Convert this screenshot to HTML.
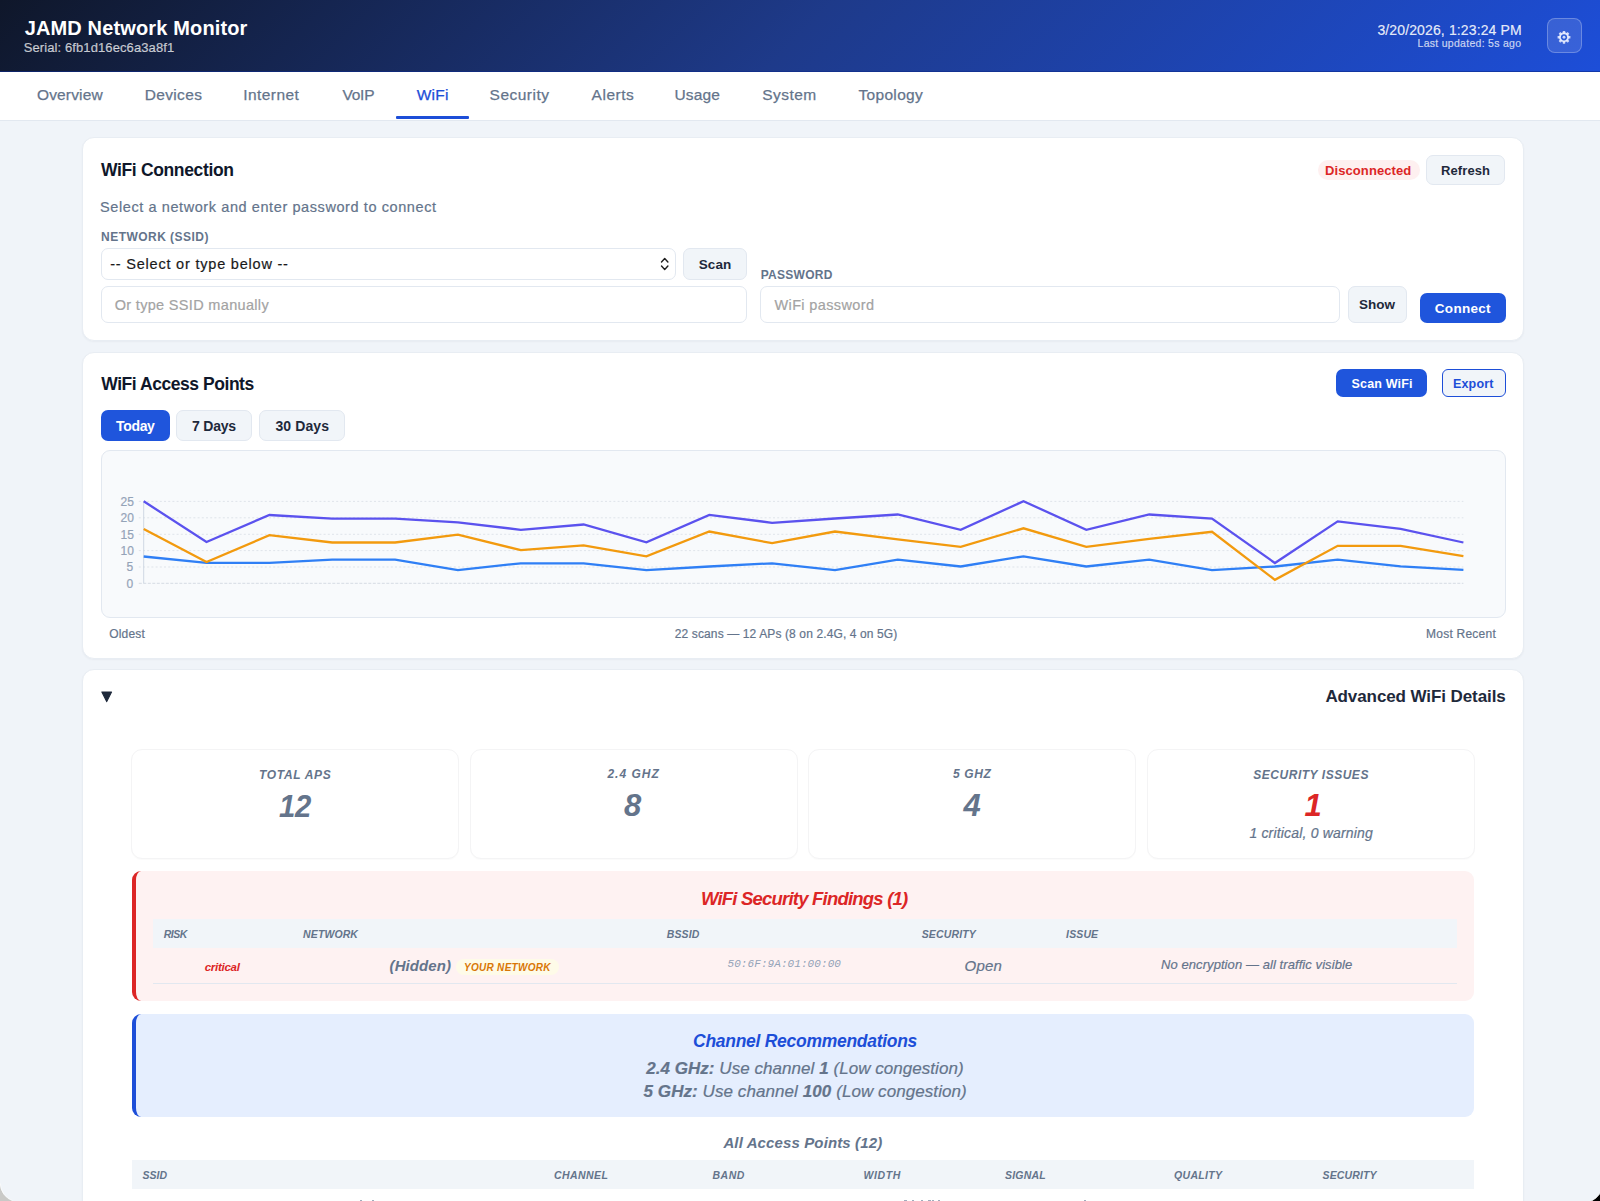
<!DOCTYPE html>
<html><head><meta charset="utf-8"><title>JAMD Network Monitor - WiFi</title>
<style>
html,body{margin:0;padding:0;}
body{width:1600px;height:1201px;overflow:hidden;position:relative;background:#f0f4f9;font-family:'Liberation Sans', sans-serif;}
.b{position:absolute;}
.t{position:absolute;white-space:pre;line-height:1;}
.t b{font-weight:700;}
</style></head><body>
<div class="b" style="left:0px;top:0px;width:1600.00px;height:72.00px;background:linear-gradient(135deg,#0f172a 0%,#1e3a8a 50%,#1d4ed8 100%);"></div><div class="b" style="left:0px;top:71px;width:1600.00px;height:1.00px;background:#0b2a8a;opacity:.6;"></div><div class="b" style="left:0px;top:72px;width:1600.00px;height:48.00px;background:#fff;"></div><div class="b" style="left:0px;top:120px;width:1600.00px;height:1.00px;background:#e2e8f0;"></div><div class="b" style="left:395.5px;top:116px;width:73.50px;height:3.00px;background:#1d4ed8;border-radius:1px;"></div><div class="b" style="left:1547px;top:18px;width:35.00px;height:35.00px;background:rgba(255,255,255,0.12);border:1px solid rgba(255,255,255,0.25);border-radius:8px;box-sizing:border-box;"></div><div class="b" style="left:82px;top:137px;width:1442.30px;height:204.20px;background:#fff;border:1px solid #e8edf3;border-radius:12px;box-sizing:border-box;box-shadow:0 1px 2px rgba(15,23,42,0.04);"></div><div class="b" style="left:1318px;top:159.5px;width:102.00px;height:20.50px;background:#fef0f0;border-radius:10px;"></div><div class="b" style="left:1426.4px;top:154.5px;width:79.00px;height:30.00px;background:#f1f5f9;border:1px solid #e2e8f0;border-radius:7px;box-sizing:border-box;"></div><div class="b" style="left:100.5px;top:248px;width:575.00px;height:32.00px;background:#fff;border:1px solid #e2e8f0;border-radius:7px;box-sizing:border-box;"></div><div class="b" style="left:683.2px;top:248px;width:63.50px;height:32.00px;background:#f1f5f9;border:1px solid #e2e8f0;border-radius:7px;box-sizing:border-box;"></div><div class="b" style="left:100.5px;top:286px;width:646.20px;height:37.00px;background:#fff;border:1px solid #e2e8f0;border-radius:7px;box-sizing:border-box;"></div><div class="b" style="left:760.4px;top:286px;width:579.90px;height:37.00px;background:#fff;border:1px solid #e2e8f0;border-radius:7px;box-sizing:border-box;"></div><div class="b" style="left:1347.8px;top:286px;width:59.10px;height:37.00px;background:#f1f5f9;border:1px solid #e2e8f0;border-radius:7px;box-sizing:border-box;"></div><div class="b" style="left:1420.4px;top:293.4px;width:85.30px;height:29.60px;background:#1f55dc;border-radius:7px;"></div><div class="b" style="left:82px;top:351.6px;width:1442.30px;height:307.40px;background:#fff;border:1px solid #e8edf3;border-radius:12px;box-sizing:border-box;box-shadow:0 1px 2px rgba(15,23,42,0.04);"></div><div class="b" style="left:1336.4px;top:369px;width:90.60px;height:28.30px;background:#1f55dc;border-radius:7px;"></div><div class="b" style="left:1441.8px;top:369px;width:63.90px;height:28.30px;background:#f1f5f9;border:1.3px solid #1d4ed8;border-radius:6px;box-sizing:border-box;"></div><div class="b" style="left:100.9px;top:410.4px;width:68.70px;height:30.80px;background:#1f55dc;border-radius:7px;"></div><div class="b" style="left:176.2px;top:410.4px;width:76.00px;height:30.80px;background:#f1f5f9;border:1px solid #e2e8f0;border-radius:7px;box-sizing:border-box;"></div><div class="b" style="left:259.2px;top:410.4px;width:85.50px;height:30.80px;background:#f1f5f9;border:1px solid #e2e8f0;border-radius:7px;box-sizing:border-box;"></div><div class="b" style="left:100.7px;top:450.4px;width:1404.90px;height:167.20px;background:#f8fafc;border:1px solid #e2e8f0;border-radius:9px;box-sizing:border-box;"></div><div class="b" style="left:82px;top:669.4px;width:1442.30px;height:590.60px;background:#fff;border:1px solid #e8edf3;border-radius:12px;box-sizing:border-box;box-shadow:0 1px 2px rgba(15,23,42,0.04);"></div><div class="b" style="left:130.8px;top:749.2px;width:328.60px;height:110.00px;background:#fff;border:1px solid #f4f4f5;border-radius:11px;box-sizing:border-box;box-shadow:0 1px 1px rgba(0,0,0,0.02);"></div><div class="b" style="left:469.7px;top:749.2px;width:328.20px;height:110.00px;background:#fff;border:1px solid #f4f4f5;border-radius:11px;box-sizing:border-box;box-shadow:0 1px 1px rgba(0,0,0,0.02);"></div><div class="b" style="left:808.4px;top:749.2px;width:327.80px;height:110.00px;background:#fff;border:1px solid #f4f4f5;border-radius:11px;box-sizing:border-box;box-shadow:0 1px 1px rgba(0,0,0,0.02);"></div><div class="b" style="left:1147.4px;top:749.2px;width:327.80px;height:110.00px;background:#fff;border:1px solid #f4f4f5;border-radius:11px;box-sizing:border-box;box-shadow:0 1px 1px rgba(0,0,0,0.02);"></div><div class="b" style="left:132px;top:871px;width:1342.00px;height:130.00px;background:#fef2f2;border-left:4px solid #dc2626;border-radius:9px;box-sizing:border-box;"></div><div class="b" style="left:153.3px;top:919.2px;width:1304.20px;height:29.20px;background:#f1f5f9;"></div><div class="b" style="left:153.3px;top:983px;width:1304.20px;height:1.20px;background:#e2e8f0;"></div><div class="b" style="left:455.6px;top:959px;width:103.90px;height:15.50px;background:#fefbe8;border-radius:8px;"></div><div class="b" style="left:132px;top:1014px;width:1342.00px;height:102.50px;background:#e5eefe;border-left:4px solid #1d4ed8;border-radius:9px;box-sizing:border-box;"></div><div class="b" style="left:132px;top:1160px;width:1342.00px;height:29.00px;background:#f1f5f9;"></div><div class="b" style="left:359.8px;top:1199.6px;width:2.20px;height:1.40px;background:#8a97ab;opacity:.8;"></div><div class="b" style="left:372px;top:1199.6px;width:2.20px;height:1.40px;background:#8a97ab;opacity:.8;"></div><div class="b" style="left:904.4px;top:1199.6px;width:2.20px;height:1.40px;background:#8a97ab;opacity:.8;"></div><div class="b" style="left:912.2px;top:1199.6px;width:2.20px;height:1.40px;background:#8a97ab;opacity:.8;"></div><div class="b" style="left:921.2px;top:1199.6px;width:2.20px;height:1.40px;background:#8a97ab;opacity:.8;"></div><div class="b" style="left:928.4px;top:1199.6px;width:2.20px;height:1.40px;background:#8a97ab;opacity:.8;"></div><div class="b" style="left:932.1px;top:1199.6px;width:2.20px;height:1.40px;background:#8a97ab;opacity:.8;"></div><div class="b" style="left:937.7px;top:1199.6px;width:2.20px;height:1.40px;background:#8a97ab;opacity:.8;"></div><div class="b" style="left:1084px;top:1199.6px;width:2.20px;height:1.40px;background:#8a97ab;opacity:.8;"></div>
<svg style="position:absolute;left:0;top:0" width="1600" height="1201" viewBox="0 0 1600 1201"><line x1="138.8" y1="501.4" x2="1463.4" y2="501.4" stroke="#dfe4ea" stroke-width="1" stroke-dasharray="2 2.2"/><line x1="138.8" y1="517.8" x2="1463.4" y2="517.8" stroke="#dfe4ea" stroke-width="1" stroke-dasharray="2 2.2"/><line x1="138.8" y1="534.3" x2="1463.4" y2="534.3" stroke="#dfe4ea" stroke-width="1" stroke-dasharray="2 2.2"/><line x1="138.8" y1="550.6" x2="1463.4" y2="550.6" stroke="#dfe4ea" stroke-width="1" stroke-dasharray="2 2.2"/><line x1="138.8" y1="567.0" x2="1463.4" y2="567.0" stroke="#dfe4ea" stroke-width="1" stroke-dasharray="2 2.2"/><line x1="138.8" y1="583.3" x2="1463.4" y2="583.3" stroke="#d5dbe3" stroke-width="1" stroke-dasharray="3 1.5"/><line x1="143.7" y1="501.4" x2="143.7" y2="583.3" stroke="#cfd8e3" stroke-width="1"/>
<polyline points="143.7,556.5 206.5,562.9 269.4,562.9 332.2,559.7 395.1,559.7 457.9,570.1 520.8,563.3 583.6,563.3 646.4,570.1 709.3,566.5 772.1,563.3 835.0,570.1 897.8,559.7 960.7,566.5 1023.5,556.3 1086.3,566.5 1149.2,559.7 1212.0,570.1 1274.9,566.5 1337.7,559.6 1400.6,566.3 1463.4,569.8" fill="none" stroke="#2f7ff5" stroke-width="2.3" stroke-linejoin="miter"/>
<polyline points="143.7,528.9 206.5,562.0 269.4,535.2 332.2,542.5 395.1,542.5 457.9,534.7 520.8,550.2 583.6,545.3 646.4,556.4 709.3,531.5 772.1,543.2 835.0,531.5 897.8,539.3 960.7,546.8 1023.5,528.3 1086.3,546.8 1149.2,538.9 1212.0,531.8 1274.9,579.8 1337.7,545.8 1400.6,545.8 1463.4,556.2" fill="none" stroke="#f29a0e" stroke-width="2.3" stroke-linejoin="miter"/>
<polyline points="143.7,501.3 206.5,542.0 269.4,515.0 332.2,518.7 395.1,518.7 457.9,522.3 520.8,529.8 583.6,524.5 646.4,542.4 709.3,514.9 772.1,522.8 835.0,518.5 897.8,514.5 960.7,529.8 1023.5,501.2 1086.3,529.8 1149.2,514.5 1212.0,518.6 1274.9,563.0 1337.7,521.4 1400.6,528.8 1463.4,542.5" fill="none" stroke="#5b52ee" stroke-width="2.3" stroke-linejoin="miter"/>
<path d="M101.9 692.0 L111.5 692.0 L106.7 701.6 Z" fill="#1e293b" stroke="#1e293b" stroke-width="1.2" stroke-linejoin="round"/>
<path d="M661.5 262 L664.7 258.6 L667.9 262 M661.5 266 L664.7 269.4 L667.9 266" fill="none" stroke="#1e1e1e" stroke-width="1.4" stroke-linecap="round" stroke-linejoin="round"/>
<path d="M0 1183.5 L0 1201 L13 1201 A19 19 0 0 1 0 1183.5 Z" fill="#c9c9c7"/><path d="M0.3 1183.5 A19 19 0 0 0 13 1201" fill="none" stroke="#fff" stroke-width="0.8" opacity=".8"/>
<path d="M1600 1193.5 L1600 1201 L1591.5 1201 A24 24 0 0 0 1600 1193.5 Z" fill="#000"/><path d="M1591.5 1201 A24 24 0 0 0 1600 1193.5" fill="none" stroke="#fff" stroke-width="0.9" opacity=".9"/>
</svg><svg style="position:absolute;left:0;top:0" width="1600" height="80" viewBox="0 0 1600 80">
<g transform="translate(1564,37.3)" fill="rgba(235,240,255,0.85)">
<circle r="5.0"/>
<rect x="-1.25" y="-6.4" width="2.5" height="12.8" rx="0.4"/>
<rect x="-1.25" y="-6.4" width="2.5" height="12.8" rx="0.4" transform="rotate(45)"/>
<rect x="-1.25" y="-6.4" width="2.5" height="12.8" rx="0.4" transform="rotate(90)"/>
<rect x="-1.25" y="-6.4" width="2.5" height="12.8" rx="0.4" transform="rotate(135)"/>
<circle r="3.1" fill="#2d5dd8"/>
<circle r="1.45"/>
</g>
</svg>
<span class="t" style="left:24.70px;top:17.70px;color:#ffffff;font-family:'Liberation Sans', sans-serif;font-size:20px;font-weight:700;font-style:normal;letter-spacing:0.142px;">JAMD Network Monitor</span><span class="t" style="left:23.70px;top:41.30px;color:rgba(255,255,255,0.72);font-family:'Liberation Sans', sans-serif;font-size:13px;font-weight:400;font-style:normal;letter-spacing:0.100px;-webkit-text-stroke:0.2px currentColor;">Serial: 6fb1d16ec6a3a8f1</span><span class="t" style="left:1377.40px;top:22.50px;color:rgba(255,255,255,0.88);font-family:'Liberation Sans', sans-serif;font-size:14px;font-weight:400;font-style:normal;letter-spacing:0.130px;-webkit-text-stroke:0.2px currentColor;">3/20/2026, 1:23:24 PM</span><span class="t" style="left:1417.50px;top:37.60px;color:rgba(255,255,255,0.72);font-family:'Liberation Sans', sans-serif;font-size:10.5px;font-weight:400;font-style:normal;letter-spacing:0.289px;-webkit-text-stroke:0.2px currentColor;">Last updated: 5s ago</span><span class="t" style="left:37.00px;top:87.20px;color:#64748b;font-family:'Liberation Sans', sans-serif;font-size:15.5px;font-weight:400;font-style:normal;letter-spacing:0.143px;-webkit-text-stroke:0.25px currentColor;">Overview</span><span class="t" style="left:144.75px;top:87.20px;color:#64748b;font-family:'Liberation Sans', sans-serif;font-size:15.5px;font-weight:400;font-style:normal;letter-spacing:0.333px;-webkit-text-stroke:0.25px currentColor;">Devices</span><span class="t" style="left:243.25px;top:87.20px;color:#64748b;font-family:'Liberation Sans', sans-serif;font-size:15.5px;font-weight:400;font-style:normal;letter-spacing:0.429px;-webkit-text-stroke:0.25px currentColor;">Internet</span><span class="t" style="left:342.50px;top:87.20px;color:#64748b;font-family:'Liberation Sans', sans-serif;font-size:15.5px;font-weight:400;font-style:normal;letter-spacing:-0.250px;-webkit-text-stroke:0.25px currentColor;">VoIP</span><span class="t" style="left:416.70px;top:87.20px;color:#1d4ed8;font-family:'Liberation Sans', sans-serif;font-size:15.5px;font-weight:400;font-style:normal;letter-spacing:0.267px;-webkit-text-stroke:0.25px currentColor;">WiFi</span><span class="t" style="left:489.60px;top:87.20px;color:#64748b;font-family:'Liberation Sans', sans-serif;font-size:15.5px;font-weight:400;font-style:normal;letter-spacing:0.486px;-webkit-text-stroke:0.25px currentColor;">Security</span><span class="t" style="left:591.60px;top:87.20px;color:#64748b;font-family:'Liberation Sans', sans-serif;font-size:15.5px;font-weight:400;font-style:normal;letter-spacing:0.520px;-webkit-text-stroke:0.25px currentColor;">Alerts</span><span class="t" style="left:674.50px;top:87.20px;color:#64748b;font-family:'Liberation Sans', sans-serif;font-size:15.5px;font-weight:400;font-style:normal;letter-spacing:0.125px;-webkit-text-stroke:0.25px currentColor;">Usage</span><span class="t" style="left:762.20px;top:87.20px;color:#64748b;font-family:'Liberation Sans', sans-serif;font-size:15.5px;font-weight:400;font-style:normal;letter-spacing:0.460px;-webkit-text-stroke:0.25px currentColor;">System</span><span class="t" style="left:858.40px;top:87.20px;color:#64748b;font-family:'Liberation Sans', sans-serif;font-size:15.5px;font-weight:400;font-style:normal;letter-spacing:0.343px;-webkit-text-stroke:0.25px currentColor;">Topology</span><span class="t" style="left:101.00px;top:162.20px;color:#0f172a;font-family:'Liberation Sans', sans-serif;font-size:17.5px;font-weight:700;font-style:normal;letter-spacing:-0.350px;">WiFi Connection</span><span class="t" style="left:1325.00px;top:163.50px;color:#dc2626;font-family:'Liberation Sans', sans-serif;font-size:13px;font-weight:700;font-style:normal;letter-spacing:0.091px;">Disconnected</span><span class="t" style="left:1441.00px;top:163.50px;color:#1e293b;font-family:'Liberation Sans', sans-serif;font-size:13px;font-weight:700;font-style:normal;letter-spacing:0.100px;">Refresh</span><span class="t" style="left:100.00px;top:200.20px;color:#64748b;font-family:'Liberation Sans', sans-serif;font-size:14.5px;font-weight:400;font-style:normal;letter-spacing:0.589px;-webkit-text-stroke:0.2px currentColor;">Select a network and enter password to connect</span><span class="t" style="left:101.10px;top:230.60px;color:#64748b;font-family:'Liberation Sans', sans-serif;font-size:12px;font-weight:700;font-style:normal;letter-spacing:0.462px;">NETWORK (SSID)</span><span class="t" style="left:110.20px;top:256.50px;color:#1a1a1a;font-family:'Liberation Sans', sans-serif;font-size:14.5px;font-weight:400;font-style:normal;letter-spacing:0.792px;-webkit-text-stroke:0.2px currentColor;">-- Select or type below --</span><span class="t" style="left:698.80px;top:257.80px;color:#1e293b;font-family:'Liberation Sans', sans-serif;font-size:13.5px;font-weight:700;font-style:normal;letter-spacing:0.067px;">Scan</span><span class="t" style="left:760.70px;top:268.70px;color:#64748b;font-family:'Liberation Sans', sans-serif;font-size:12px;font-weight:700;font-style:normal;letter-spacing:0.271px;">PASSWORD</span><span class="t" style="left:114.70px;top:297.70px;color:#a3a3a3;font-family:'Liberation Sans', sans-serif;font-size:14.5px;font-weight:400;font-style:normal;letter-spacing:0.325px;-webkit-text-stroke:0.2px currentColor;">Or type SSID manually</span><span class="t" style="left:774.50px;top:297.70px;color:#a3a3a3;font-family:'Liberation Sans', sans-serif;font-size:14.5px;font-weight:400;font-style:normal;letter-spacing:0.367px;-webkit-text-stroke:0.2px currentColor;">WiFi password</span><span class="t" style="left:1359.00px;top:298.40px;color:#1e293b;font-family:'Liberation Sans', sans-serif;font-size:13.5px;font-weight:700;font-style:normal;letter-spacing:0.000px;">Show</span><span class="t" style="left:1434.80px;top:302.00px;color:#ffffff;font-family:'Liberation Sans', sans-serif;font-size:13.5px;font-weight:700;font-style:normal;letter-spacing:0.300px;">Connect</span><span class="t" style="left:101.30px;top:375.90px;color:#0f172a;font-family:'Liberation Sans', sans-serif;font-size:17.5px;font-weight:700;font-style:normal;letter-spacing:-0.453px;">WiFi Access Points</span><span class="t" style="left:1351.50px;top:377.80px;color:#ffffff;font-family:'Liberation Sans', sans-serif;font-size:12.5px;font-weight:700;font-style:normal;letter-spacing:0.175px;">Scan WiFi</span><span class="t" style="left:1452.90px;top:377.80px;color:#1d4ed8;font-family:'Liberation Sans', sans-serif;font-size:12.5px;font-weight:700;font-style:normal;letter-spacing:0.200px;">Export</span><span class="t" style="left:116.00px;top:419.00px;color:#ffffff;font-family:'Liberation Sans', sans-serif;font-size:14px;font-weight:700;font-style:normal;letter-spacing:-0.325px;">Today</span><span class="t" style="left:192.00px;top:419.00px;color:#1e293b;font-family:'Liberation Sans', sans-serif;font-size:14px;font-weight:700;font-style:normal;letter-spacing:-0.200px;">7 Days</span><span class="t" style="left:275.50px;top:419.00px;color:#1e293b;font-family:'Liberation Sans', sans-serif;font-size:14px;font-weight:700;font-style:normal;letter-spacing:0.083px;">30 Days</span><span class="t" style="left:109.30px;top:628.20px;color:#64748b;font-family:'Liberation Sans', sans-serif;font-size:12px;font-weight:400;font-style:normal;letter-spacing:0.160px;-webkit-text-stroke:0.2px currentColor;">Oldest</span><span class="t" style="left:674.80px;top:628.30px;color:#64748b;font-family:'Liberation Sans', sans-serif;font-size:12px;font-weight:400;font-style:normal;letter-spacing:0.119px;-webkit-text-stroke:0.2px currentColor;">22 scans — 12 APs (8 on 2.4G, 4 on 5G)</span><span class="t" style="left:1426.00px;top:628.30px;color:#64748b;font-family:'Liberation Sans', sans-serif;font-size:12px;font-weight:400;font-style:normal;letter-spacing:0.240px;-webkit-text-stroke:0.2px currentColor;">Most Recent</span><span class="t" style="left:1325.40px;top:688.10px;color:#1e293b;font-family:'Liberation Sans', sans-serif;font-size:17px;font-weight:700;font-style:normal;letter-spacing:-0.090px;">Advanced WiFi Details</span><span class="t" style="left:259.00px;top:768.70px;color:#64748b;font-family:'Liberation Sans', sans-serif;font-size:12px;font-weight:700;font-style:italic;letter-spacing:0.700px;">TOTAL APS</span><span class="t" style="left:278.80px;top:790.60px;color:#64748b;font-family:'Liberation Sans', sans-serif;font-size:31.5px;font-weight:700;font-style:italic;letter-spacing:-0.300px;transform:scaleX(0.93);transform-origin:0 0;">12</span><span class="t" style="left:607.40px;top:768.40px;color:#64748b;font-family:'Liberation Sans', sans-serif;font-size:12px;font-weight:700;font-style:italic;letter-spacing:1.017px;">2.4 GHZ</span><span class="t" style="left:623.90px;top:790.40px;color:#64748b;font-family:'Liberation Sans', sans-serif;font-size:31px;font-weight:700;font-style:italic;letter-spacing:1.500px;">8</span><span class="t" style="left:953.00px;top:768.40px;color:#64748b;font-family:'Liberation Sans', sans-serif;font-size:12px;font-weight:700;font-style:italic;letter-spacing:0.650px;">5 GHZ</span><span class="t" style="left:963.40px;top:790.40px;color:#64748b;font-family:'Liberation Sans', sans-serif;font-size:31px;font-weight:700;font-style:italic;letter-spacing:0.700px;">4</span><span class="t" style="left:1253.30px;top:768.70px;color:#64748b;font-family:'Liberation Sans', sans-serif;font-size:12px;font-weight:700;font-style:italic;letter-spacing:0.521px;">SECURITY ISSUES</span><span class="t" style="left:1304.50px;top:790.10px;color:#dc2626;font-family:'Liberation Sans', sans-serif;font-size:31px;font-weight:700;font-style:italic;letter-spacing:-2.200px;">1</span><span class="t" style="left:1249.40px;top:826.40px;color:#64748b;font-family:'Liberation Sans', sans-serif;font-size:14px;font-weight:400;font-style:italic;letter-spacing:0.180px;-webkit-text-stroke:0.2px currentColor;">1 critical, 0 warning</span><span class="t" style="left:701.00px;top:889.50px;color:#dc2626;font-family:'Liberation Sans', sans-serif;font-size:18.5px;font-weight:700;font-style:italic;letter-spacing:-0.792px;">WiFi Security Findings (1)</span><span class="t" style="left:163.70px;top:929.30px;color:#64748b;font-family:'Liberation Sans', sans-serif;font-size:10.5px;font-weight:700;font-style:italic;letter-spacing:-0.467px;">RISK</span><span class="t" style="left:303.10px;top:929.30px;color:#64748b;font-family:'Liberation Sans', sans-serif;font-size:10.5px;font-weight:700;font-style:italic;letter-spacing:0.100px;">NETWORK</span><span class="t" style="left:666.70px;top:929.30px;color:#64748b;font-family:'Liberation Sans', sans-serif;font-size:10.5px;font-weight:700;font-style:italic;letter-spacing:0.150px;">BSSID</span><span class="t" style="left:921.70px;top:929.30px;color:#64748b;font-family:'Liberation Sans', sans-serif;font-size:10.5px;font-weight:700;font-style:italic;letter-spacing:0.157px;">SECURITY</span><span class="t" style="left:1066.10px;top:929.30px;color:#64748b;font-family:'Liberation Sans', sans-serif;font-size:10.5px;font-weight:700;font-style:italic;letter-spacing:0.125px;">ISSUE</span><span class="t" style="left:204.70px;top:961.80px;color:#dc2626;font-family:'Liberation Sans', sans-serif;font-size:11.5px;font-weight:700;font-style:italic;letter-spacing:-0.271px;">critical</span><span class="t" style="left:389.60px;top:958.00px;color:#64748b;font-family:'Liberation Sans', sans-serif;font-size:15px;font-weight:700;font-style:italic;letter-spacing:0.086px;">(Hidden)</span><span class="t" style="left:464.00px;top:962.60px;color:#d97706;font-family:'Liberation Sans', sans-serif;font-size:10px;font-weight:700;font-style:italic;letter-spacing:0.291px;">YOUR NETWORK</span><span class="t" style="left:727.50px;top:958.70px;color:#94a3b8;font-family:'Liberation Mono', monospace;font-size:11px;font-weight:400;font-style:italic;letter-spacing:0.075px;">50:6F:9A:01:00:00</span><span class="t" style="left:964.60px;top:958.20px;color:#64748b;font-family:'Liberation Sans', sans-serif;font-size:15px;font-weight:400;font-style:italic;letter-spacing:0.200px;-webkit-text-stroke:0.2px currentColor;">Open</span><span class="t" style="left:1161.00px;top:957.60px;color:#64748b;font-family:'Liberation Sans', sans-serif;font-size:13px;font-weight:400;font-style:italic;letter-spacing:0.076px;-webkit-text-stroke:0.2px currentColor;">No encryption — all traffic visible</span><span class="t" style="left:693.10px;top:1032.50px;color:#1d4ed8;font-family:'Liberation Sans', sans-serif;font-size:17.5px;font-weight:700;font-style:italic;letter-spacing:-0.282px;">Channel Recommendations</span><span class="t" style="left:646.20px;top:1060.10px;color:#64748b;font-family:'Liberation Sans', sans-serif;font-size:17px;font-weight:400;font-style:italic;letter-spacing:0.047px;-webkit-text-stroke:0.2px currentColor;"><b>2.4 GHz:</b> Use channel <b>1</b> (Low congestion)</span><span class="t" style="left:643.50px;top:1082.60px;color:#64748b;font-family:'Liberation Sans', sans-serif;font-size:17px;font-weight:400;font-style:italic;letter-spacing:0.076px;-webkit-text-stroke:0.2px currentColor;"><b>5 GHz:</b> Use channel <b>100</b> (Low congestion)</span><span class="t" style="left:723.40px;top:1134.70px;color:#64748b;font-family:'Liberation Sans', sans-serif;font-size:15px;font-weight:700;font-style:italic;letter-spacing:0.124px;">All Access Points (12)</span><span class="t" style="left:142.50px;top:1170.20px;color:#64748b;font-family:'Liberation Sans', sans-serif;font-size:10.5px;font-weight:700;font-style:italic;letter-spacing:0.000px;">SSID</span><span class="t" style="left:554.00px;top:1170.20px;color:#64748b;font-family:'Liberation Sans', sans-serif;font-size:10.5px;font-weight:700;font-style:italic;letter-spacing:0.417px;">CHANNEL</span><span class="t" style="left:712.50px;top:1170.20px;color:#64748b;font-family:'Liberation Sans', sans-serif;font-size:10.5px;font-weight:700;font-style:italic;letter-spacing:0.500px;">BAND</span><span class="t" style="left:863.50px;top:1170.20px;color:#64748b;font-family:'Liberation Sans', sans-serif;font-size:10.5px;font-weight:700;font-style:italic;letter-spacing:0.625px;">WIDTH</span><span class="t" style="left:1005.00px;top:1170.20px;color:#64748b;font-family:'Liberation Sans', sans-serif;font-size:10.5px;font-weight:700;font-style:italic;letter-spacing:0.200px;">SIGNAL</span><span class="t" style="left:1174.00px;top:1170.20px;color:#64748b;font-family:'Liberation Sans', sans-serif;font-size:10.5px;font-weight:700;font-style:italic;letter-spacing:0.333px;">QUALITY</span><span class="t" style="left:1322.50px;top:1170.20px;color:#64748b;font-family:'Liberation Sans', sans-serif;font-size:10.5px;font-weight:700;font-style:italic;letter-spacing:0.143px;">SECURITY</span><span class="t" style="left:120.50px;top:495.70px;color:#94a3b8;font-family:'Liberation Sans', sans-serif;font-size:12px;font-weight:400;font-style:normal;letter-spacing:0.000px;-webkit-text-stroke:0.2px currentColor;">25</span><span class="t" style="left:120.50px;top:512.10px;color:#94a3b8;font-family:'Liberation Sans', sans-serif;font-size:12px;font-weight:400;font-style:normal;letter-spacing:0.000px;-webkit-text-stroke:0.2px currentColor;">20</span><span class="t" style="left:120.50px;top:528.60px;color:#94a3b8;font-family:'Liberation Sans', sans-serif;font-size:12px;font-weight:400;font-style:normal;letter-spacing:0.000px;-webkit-text-stroke:0.2px currentColor;">15</span><span class="t" style="left:120.50px;top:544.90px;color:#94a3b8;font-family:'Liberation Sans', sans-serif;font-size:12px;font-weight:400;font-style:normal;letter-spacing:0.000px;-webkit-text-stroke:0.2px currentColor;">10</span><span class="t" style="left:126.50px;top:561.30px;color:#94a3b8;font-family:'Liberation Sans', sans-serif;font-size:12px;font-weight:400;font-style:normal;letter-spacing:0.000px;-webkit-text-stroke:0.2px currentColor;">5</span><span class="t" style="left:126.50px;top:577.60px;color:#94a3b8;font-family:'Liberation Sans', sans-serif;font-size:12px;font-weight:400;font-style:normal;letter-spacing:0.000px;-webkit-text-stroke:0.2px currentColor;">0</span>
</body></html>
